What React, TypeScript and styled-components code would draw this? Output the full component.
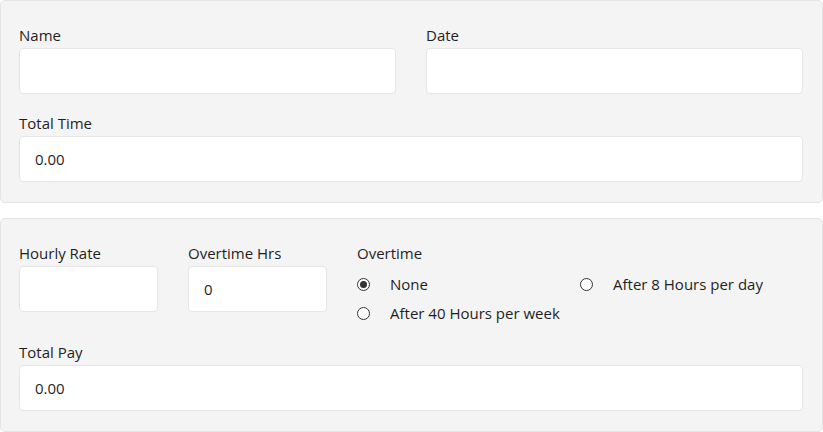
import React from "react";
import styled, { createGlobalStyle } from "styled-components";

const GlobalStyle = createGlobalStyle`
  html, body {
    margin: 0;
    padding: 0;
    background: #ffffff;
  }
  body {
    font-family: "Open Sans", "Noto Sans", "Liberation Sans", sans-serif;
    font-size: 15px;
    color: #1f1f1f;
  }
`;

const Page = styled.main`
  display: flex;
  flex-direction: column;
  gap: 15px;
  width: 823px;
`;

const Panel = styled.section`
  background: #f4f4f4;
  border: 1px solid #e4e4e4;
  border-radius: 5px;
  padding: 22px 19px 20px 18px;
  display: flex;
  flex-direction: column;
  gap: 17px;
`;

const Row = styled.div<{ $cols: string }>`
  display: grid;
  grid-template-columns: ${({ $cols }) => $cols};
  column-gap: 30px;
`;

const Field = styled.div`
  display: flex;
  flex-direction: column;
  gap: 1px;
`;

const Label = styled.label`
  font-size: 15px;
  line-height: 24px;
  height: 24px;
  color: #1f1f1f;
`;

const Input = styled.input`
  box-sizing: border-box;
  height: 46px;
  width: 100%;
  border: 1px solid #e6e6e6;
  border-radius: 4px;
  background: #ffffff;
  padding: 0 15px;
  font-family: inherit;
  font-size: 15px;
  color: #1f1f1f;
  outline: none;
`;

const RadioGrid = styled.div`
  display: grid;
  grid-template-columns: 1fr 1fr;
  row-gap: 9px;
  padding-top: 8px;
`;

const RadioOption = styled.label`
  display: flex;
  align-items: center;
  gap: 20px;
  height: 20px;
  font-size: 15px;
  cursor: pointer;
`;

const RadioDot = styled.span<{ $checked?: boolean }>`
  box-sizing: border-box;
  width: 13px;
  height: 13px;
  border-radius: 50%;
  border: 1px solid #333;
  background: #fff;
  display: flex;
  align-items: center;
  justify-content: center;
  flex-shrink: 0;
  &::after {
    content: "";
    width: 7px;
    height: 7px;
    border-radius: 50%;
    background: ${({ $checked }) => ($checked ? "#333" : "transparent")};
  }
`;

export default function App() {
  return (
    <>
      <GlobalStyle />
      <Page>
        <Panel>
          <Row $cols="1fr 1fr">
            <Field>
              <Label>Name</Label>
              <Input />
            </Field>
            <Field>
              <Label>Date</Label>
              <Input />
            </Field>
          </Row>
          <Field>
            <Label>Total Time</Label>
            <Input defaultValue="0.00" />
          </Field>
        </Panel>
        <Panel>
          <Row $cols="139px 139px 1fr">
            <Field>
              <Label>Hourly Rate</Label>
              <Input />
            </Field>
            <Field>
              <Label>Overtime Hrs</Label>
              <Input defaultValue="0" />
            </Field>
            <Field>
              <Label>Overtime</Label>
              <RadioGrid>
                <RadioOption>
                  <RadioDot $checked />
                  None
                </RadioOption>
                <RadioOption>
                  <RadioDot />
                  After 8 Hours per day
                </RadioOption>
                <RadioOption>
                  <RadioDot />
                  After 40 Hours per week
                </RadioOption>
              </RadioGrid>
            </Field>
          </Row>
          <Field>
            <Label>Total Pay</Label>
            <Input defaultValue="0.00" />
          </Field>
        </Panel>
      </Page>
    </>
  );
}
